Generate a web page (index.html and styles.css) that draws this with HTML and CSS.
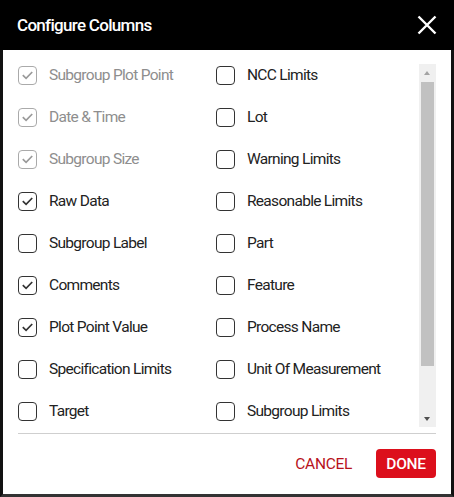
FILE: index.html
```html
<!DOCTYPE html>
<html>
<head>
<meta charset="utf-8">
<link rel="stylesheet" href="styles.css">
</head>
<body>
<div class="dialog">
  <div class="header">
    <span class="title">Configure Columns</span>
    <svg class="close" width="20" height="20" viewBox="0 0 20 20"><path d="M1.5 1.5 L18.5 18.5 M18.5 1.5 L1.5 18.5" stroke="#fff" stroke-width="2.4" fill="none"/></svg>
  </div>
  <div class="content">
    <div class="scroller">
      <div class="list">
        <label class="item disabled"><span class="box checked"><svg viewBox="0 0 18 18"><path d="M4 9.2 L7.5 12.5 L14 5.8" /></svg></span>Subgroup Plot Point</label>
        <label class="item"><span class="box"></span>NCC Limits</label>
        <label class="item disabled"><span class="box checked"><svg viewBox="0 0 18 18"><path d="M4 9.2 L7.5 12.5 L14 5.8" /></svg></span>Date &amp; Time</label>
        <label class="item"><span class="box"></span>Lot</label>
        <label class="item disabled"><span class="box checked"><svg viewBox="0 0 18 18"><path d="M4 9.2 L7.5 12.5 L14 5.8" /></svg></span>Subgroup Size</label>
        <label class="item"><span class="box"></span>Warning Limits</label>
        <label class="item"><span class="box checked"><svg viewBox="0 0 18 18"><path d="M4 9.2 L7.5 12.5 L14 5.8" /></svg></span>Raw Data</label>
        <label class="item"><span class="box"></span>Reasonable Limits</label>
        <label class="item"><span class="box"></span>Subgroup Label</label>
        <label class="item"><span class="box"></span>Part</label>
        <label class="item"><span class="box checked"><svg viewBox="0 0 18 18"><path d="M4 9.2 L7.5 12.5 L14 5.8" /></svg></span>Comments</label>
        <label class="item"><span class="box"></span>Feature</label>
        <label class="item"><span class="box checked"><svg viewBox="0 0 18 18"><path d="M4 9.2 L7.5 12.5 L14 5.8" /></svg></span>Plot Point Value</label>
        <label class="item"><span class="box"></span>Process Name</label>
        <label class="item"><span class="box"></span>Specification Limits</label>
        <label class="item"><span class="box"></span>Unit Of Measurement</label>
        <label class="item"><span class="box"></span>Target</label>
        <label class="item"><span class="box"></span>Subgroup Limits</label>
      </div>
      <div class="scrollbar">
        <div class="arrow up"></div>
        <div class="track"><div class="thumb"></div></div>
        <div class="arrow down"></div>
      </div>
    </div>
    <div class="divider"></div>
    <div class="footer">
      <button class="btn cancel">CANCEL</button>
      <button class="btn done">DONE</button>
    </div>
  </div>
</div>
</body>
</html>
```
FILE: styles.css
```css
* { box-sizing: border-box; }
html, body { margin: 0; padding: 0; background: #fff; }
body { font-family: Roboto, "Liberation Sans", sans-serif; }
.dialog {
  width: 454px;
  height: 497px;
  border-left: 3px solid #111;
  border-right: 3px solid #111;
  border-bottom: 3px solid #333;
  display: flex;
  flex-direction: column;
  background: #fff;
}
.header {
  height: 50px;
  background: #000;
  margin: 0 -3px;
  padding: 0 17px 0 17px;
  display: flex;
  align-items: center;
  justify-content: space-between;
}
.title {
  color: #fff;
  font-size: 17px;
  font-weight: 500;
  letter-spacing: -0.7px;
}
.close { display: block; margin-right: 0; }
.content {
  flex: 1;
  display: flex;
  flex-direction: column;
  padding: 14px 15px 0 15px;
}
.scroller {
  display: flex;
  height: 363px;
  overflow: hidden;
}
.list {
  flex: 1;
  display: grid;
  grid-template-columns: 198px 1fr;
  grid-auto-rows: 22px;
  row-gap: 20px;
  align-content: start;
}
.item {
  display: flex;
  align-items: center;
  gap: 12px;
  font-size: 15.5px;
  color: #222;
  letter-spacing: -0.7px;
}
.box {
  width: 19px;
  height: 19px;
  border: 1.5px solid #333;
  border-radius: 4px;
  flex: none;
  display: flex;
  align-items: center;
  justify-content: center;
}
.box svg { width: 18px; height: 18px; display: block; }
.box path { fill: none; stroke: #333; stroke-width: 1.8; }
.item.disabled { color: #8e8e8e; }
.item.disabled .box { border-color: #aaa; }
.item.disabled .box path { stroke: #9a9a9a; }
.scrollbar {
  width: 17px;
  background: #f0f0f0;
  display: flex;
  flex-direction: column;
}
.arrow { height: 17px; position: relative; }
.arrow.up::after, .arrow.down::after {
  content: "";
  position: absolute;
  left: 5px;
  border-left: 3.5px solid transparent;
  border-right: 3.5px solid transparent;
}
.arrow.up::after { top: 7px; border-bottom: 4px solid #a3a3a3; }
.arrow.down::after { top: 7px; border-top: 4px solid #505050; }
.track { flex: 1; padding: 1px 2px; }
.thumb { height: 284px; background: #c1c1c1; }
.divider { height: 1px; background: #cfcfcf; margin-top: 6px; }
.footer {
  display: flex;
  justify-content: flex-end;
  align-items: center;
  padding-top: 15px;
  gap: 14px;
}
.btn {
  font-family: Roboto, "Liberation Sans", sans-serif;
  font-size: 15.5px;
  border: none;
  border-radius: 4px;
  height: 29px;
  padding: 0 10px;
  letter-spacing: -0.3px;
  cursor: pointer;
}
.cancel { background: transparent; color: #b8121c; }
.done { background: #dc0f1c; color: #fff; font-weight: 500; width: 60px; }
```
